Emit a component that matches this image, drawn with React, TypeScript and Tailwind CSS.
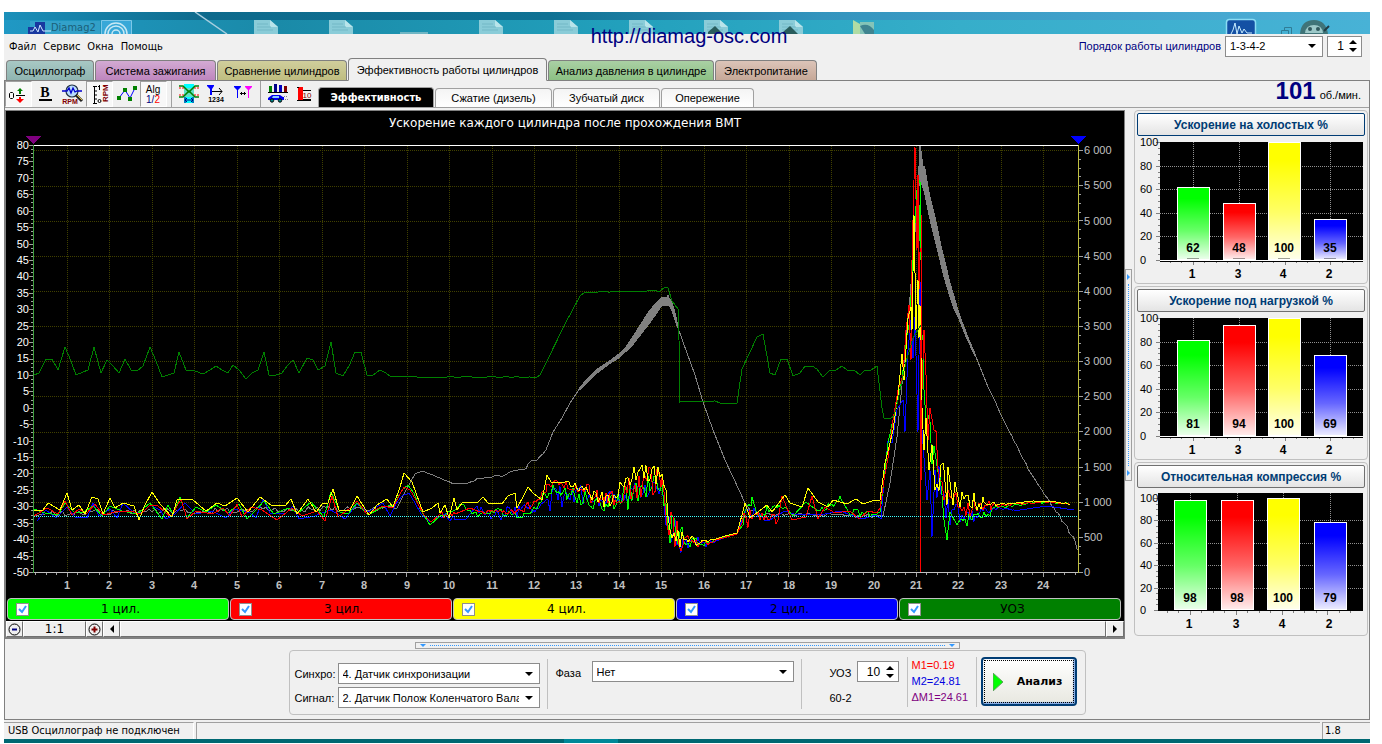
import { ReactNode, useId, useState } from "react";
import clsx from "clsx";

type Knot = [x: number, y: number, noise?: number];

// Small seeded generator, keeps every trace identical between renders
const createRandom = (seed: number) => {
  let state = seed;
  return () => {
    state = (state * 16807) % 2147483647;
    return state / 2147483647;
  };
};

// Walks through the knots and adds noise where a knot asks for it
const buildTrace = (knots: Knot[], seed = 1, step = 2) => {
  const random = createRandom(seed * 7919);
  const points: string[] = [];

  knots.forEach(([x, y, noise = 0], index) => {
    points.push(`${x},${y}`);
    const next = knots[index + 1];
    if (!next || !noise) return;

    for (let px = x + step; px < next[0]; px += step) {
      const t = (px - x) / (next[0] - x);
      const py = y + (next[1] - y) * t + (random() - 0.5) * 2 * noise;
      points.push(`${px},${py.toFixed(1)}`);
    }
  });

  return points.join(" ");
};

const advance: Knot[] = [
  [34, 375], [39, 373], [46, 359], [52, 359], [58, 370], [65, 347], [71, 361], [76, 375], [88, 370],
  [94, 347], [101, 373], [107, 360], [113, 366], [119, 373], [125, 359], [131, 370], [137, 371],
  [143, 366], [150, 347], [156, 361], [162, 377], [168, 375], [174, 373], [179, 352], [186, 370],
  [195, 371], [203, 374], [210, 370], [216, 366], [222, 370], [228, 373], [233, 365], [239, 370],
  [246, 379], [252, 373], [258, 370], [264, 352], [269, 375], [276, 375], [282, 373], [287, 366],
  [293, 360], [299, 373], [307, 358], [313, 360], [318, 370], [325, 366], [331, 342], [336, 373],
  [343, 376], [349, 366], [355, 352], [361, 352], [367, 375], [373, 375], [380, 370], [386, 373],
  [391, 377, 0.5], [537, 377], [540, 375], [546, 363], [565, 324], [580, 296], [585, 292, 0.5],
  [660, 291], [665, 287], [668, 288], [672, 301], [678, 309], [679, 340], [680, 402, 0.5], [715, 401],
  [720, 403], [737, 403], [742, 369], [757, 337], [763, 334], [770, 373], [775, 375], [781, 359],
  [787, 359], [793, 376], [800, 373], [805, 366], [812, 366], [817, 369], [823, 377], [829, 371],
  [836, 370], [842, 366], [847, 370], [854, 370], [860, 375], [865, 370], [871, 370], [877, 366],
  [882, 408], [884, 418], [890, 419], [894, 416], [898, 400], [906, 362], [913, 338], [921, 325],
];

const speed: Knot[] = [
  [34, 516], [50, 513, 3], [397, 508], [405, 492], [410, 483], [415, 474], [422, 471, 1], [440, 478, 1],
  [453, 484, 1], [468, 483, 1], [480, 478, 1], [505, 475, 1], [513, 471, 1], [526, 469, 1], [528, 464, 2],
  [537, 460, 1], [546, 450], [553, 432], [562, 418], [570, 403], [580, 388],
];

const speedDown: Knot[] = [
  [678, 328], [695, 375], [703, 402], [713, 430], [725, 460], [733, 477], [745, 503], [750, 510, 3],
  [760, 514, 2], [883, 516], [890, 483], [897, 437], [901, 395], [905, 353], [910, 297], [914, 247],
  [918, 187], [920, 146], [921, 170],
];

const speedEnd: Knot[] = [
  [974, 352], [988, 387, 1], [998, 408, 1], [1010, 433, 1], [1030, 472, 1], [1050, 502, 2],
  [1063, 522, 5], [1078, 550],
];

const cylinderFour: Knot[] = [
  [34, 511], [43, 510], [48, 503], [60, 510], [67, 493], [72, 510], [79, 505], [85, 514], [92, 497],
  [98, 499], [103, 514], [110, 498], [115, 508], [123, 503], [134, 506], [139, 520], [144, 507],
  [152, 492], [160, 504], [172, 517], [177, 500], [182, 499], [192, 499], [206, 511], [217, 503],
  [225, 506], [237, 498], [248, 512], [260, 497], [271, 505], [285, 506], [291, 499], [297, 514],
  [308, 499], [316, 512], [323, 503], [328, 503], [333, 489], [339, 510], [350, 510], [357, 496],
  [369, 515], [377, 505], [387, 499], [393, 507], [400, 487], [404, 473], [412, 482], [423, 512],
  [432, 508], [438, 503], [440, 513], [445, 505], [449, 518], [454, 498], [457, 510], [463, 502],
  [477, 503], [483, 497], [488, 503], [502, 504], [508, 496], [515, 493], [517, 508], [523, 497],
  [528, 487], [533, 493], [542, 500], [547, 475], [551, 482], [565, 482, 4], [580, 488, 6],
  [600, 498, 8], [612, 502, 10], [622, 485, 9], [638, 472, 12], [662, 474, 8], [666, 490, 8],
  [670, 530, 12], [684, 540, 6], [700, 543, 2], [716, 539], [725, 536], [737, 533], [742, 515],
  [745, 503], [750, 518], [767, 505], [772, 512], [785, 495], [790, 503], [802, 507], [808, 488],
  [818, 502], [828, 507], [833, 500], [847, 504], [856, 499], [863, 504], [875, 500], [880, 500],
  [885, 463], [890, 443], [893, 430], [898, 396], [902, 354], [904, 380], [908, 318], [911, 307],
  [912, 330], [914, 215], [916, 330], [918, 280], [919, 338], [920, 305], [922, 408], [924, 450],
  [926, 418], [929, 470], [932, 445], [935, 490, 22], [944, 470], [947, 505], [948, 467], [953, 505],
  [955, 482], [960, 507, 14], [975, 502, 10], [984, 502, 4], [1000, 504, 1], [1030, 502, 1], [1052, 501, 1],
  [1070, 504],
];

const cylinderOne: Knot[] = [
  [34, 509], [45, 513], [58, 515], [65, 503], [75, 513], [84, 512], [93, 506], [102, 516], [110, 506],
  [122, 511], [137, 514], [150, 503], [162, 519], [168, 505], [173, 514], [180, 497], [187, 518],
  [196, 507], [206, 512], [216, 505], [228, 513], [239, 504], [247, 519], [256, 510], [264, 501],
  [274, 514], [288, 508], [298, 513], [311, 502], [324, 517], [331, 492], [340, 512], [348, 514],
  [357, 503], [368, 515], [383, 507], [394, 505], [402, 490], [408, 485], [414, 493], [420, 509],
  [430, 525], [440, 516, 2], [450, 512, 3], [464, 505, 3], [478, 517, 3], [495, 510, 4], [520, 517, 3],
  [535, 508, 4], [545, 494, 6], [555, 490, 8], [575, 497, 9], [600, 503, 9], [622, 500, 16], [640, 488, 14],
  [662, 484, 9], [668, 525, 16], [684, 542, 8], [700, 544, 3], [716, 540], [737, 533], [743, 525, 10],
  [752, 497], [757, 514, 5], [785, 507], [793, 516], [806, 502], [818, 511, 4], [841, 499], [848, 511, 4],
  [875, 515], [880, 512], [884, 480], [888, 443], [893, 420], [897, 402], [902, 380], [906, 340],
  [909, 325], [912, 280], [914, 240], [917, 190], [920, 180], [921, 260], [922, 340], [923, 335],
  [924, 390], [926, 420, 20], [938, 472, 20], [944, 520], [947, 540], [950, 512], [957, 525, 9],
  [972, 520, 7], [992, 509, 3], [1004, 507, 1], [1030, 503, 1], [1052, 502, 1], [1070, 504],
];

const cylinderThree: Knot[] = [
  [34, 516], [47, 508], [58, 514], [65, 501], [72, 515], [79, 509], [86, 514], [95, 504], [103, 515],
  [115, 512], [130, 511], [141, 514], [150, 505], [158, 506], [171, 517], [181, 499], [187, 519],
  [196, 511], [212, 514], [223, 508], [230, 516], [237, 504], [242, 517], [251, 507], [262, 510],
  [277, 520], [292, 508], [302, 516], [317, 511], [325, 521], [332, 496], [338, 517], [349, 509],
  [357, 501], [367, 514], [383, 506], [393, 508], [400, 494], [404, 487], [410, 490], [416, 500],
  [424, 515], [431, 522], [440, 514, 4], [455, 514], [470, 508], [480, 512, 3], [500, 510, 4],
  [520, 510, 4], [540, 500, 6], [547, 484, 4], [560, 483, 5], [585, 490, 9], [600, 500, 9], [615, 500, 12],
  [635, 485, 15], [662, 478, 9], [667, 525, 18], [684, 540, 6], [700, 543, 3], [716, 540], [737, 534],
  [742, 523, 12], [756, 515, 5], [778, 520], [782, 496], [792, 520], [806, 517], [812, 496], [818, 519],
  [825, 507], [835, 513], [850, 511], [859, 519], [868, 511], [877, 513], [880, 508], [884, 480],
  [888, 458], [893, 420], [898, 390], [903, 375], [906, 330], [909, 305], [911, 360], [912, 260],
  [914, 180], [915, 147], [917, 250], [918, 175], [919, 290], [921, 215], [922, 390], [924, 330],
  [926, 375], [928, 440], [930, 408], [934, 430, 22], [940, 480, 20], [948, 490, 15], [960, 507, 12],
  [975, 507, 7], [992, 506, 3], [1004, 505, 1], [1030, 503, 1], [1045, 502, 1], [1070, 504],
];

const cylinderTwo: Knot[] = [
  [37, 521], [46, 510], [56, 518], [67, 507], [75, 517], [87, 518], [93, 503], [99, 516], [110, 509],
  [117, 518], [123, 503], [133, 512], [142, 513], [150, 505], [160, 510], [166, 519], [175, 514],
  [185, 503], [196, 514], [212, 511], [226, 518], [234, 509], [250, 513], [256, 518], [263, 499],
  [270, 513], [285, 514], [293, 506], [299, 519], [315, 516], [322, 513], [331, 510], [345, 519],
  [357, 504], [368, 512], [383, 503], [390, 516], [396, 504], [402, 496], [409, 493], [415, 503],
  [421, 514], [430, 522], [440, 516, 4], [455, 520], [466, 519], [475, 508, 5], [495, 515, 7], [520, 510, 6],
  [535, 512, 4], [548, 500, 12], [575, 493, 10], [600, 500, 8], [625, 495, 13], [645, 485, 14], [662, 487, 9],
  [667, 525, 14], [684, 543, 8], [700, 545, 3], [716, 541], [737, 533], [742, 520, 10], [756, 514, 4],
  [768, 521], [785, 511], [794, 514], [820, 515], [840, 511], [862, 519], [876, 515], [881, 519],
  [884, 480], [888, 441], [892, 443], [897, 410], [903, 400], [905, 432], [908, 350], [911, 320],
  [913, 358], [915, 317], [918, 432], [920, 280], [922, 430], [927, 500], [930, 470], [932, 537],
  [935, 470, 28], [942, 495, 20], [952, 510, 15], [962, 515, 10], [975, 516, 5], [992, 510, 2], [1000, 508, 1],
  [1020, 510], [1047, 506], [1074, 510],
];

const channels = [
  { name: "1 цил.", className: "bg-[#00ff00]" },
  { name: "3 цил.", className: "bg-[#ff0000]" },
  { name: "4 цил.", className: "bg-[#ffff00]" },
  { name: "2 цил.", className: "bg-[#0000ff]" },
  { name: "УОЗ", className: "bg-[#008000]" },
];

const mainTabs = [
  { name: "Осциллограф", className: "w-[88px] from-[#a8c8c4] to-[#8fb4b0]" },
  { name: "Система зажигания", className: "w-[121px] from-[#d3aad3] to-[#be86be]" },
  { name: "Сравнение цилиндров", className: "w-[130px] from-[#d0ce9c] to-[#bfbd80]" },
  { name: "Эффективность работы цилиндров", className: "w-[199px]" },
  { name: "Анализ давления в цилиндре", className: "w-[166px] from-[#aad0a4] to-[#8cc084]" },
  { name: "Электропитание", className: "w-[102px] from-[#dcc4b8] to-[#c6a898]" },
];

const chartTabs = [
  { name: "Эффективность", className: "w-[116px]" },
  { name: "Сжатие (дизель)", className: "w-[117px]" },
  { name: "Зубчатый диск", className: "w-[107px]" },
  { name: "Опережение", className: "w-[93px]" },
];

const toolGroups: { name: string; pressed?: boolean; icon: ReactNode }[][] = [
  [
    {
      name: "Ноль",
      pressed: true,
      icon: (
        <>
          <path d="M3.500 9.500h2l1 1v4l-1 1h-2l-1-1v-4z" fill="none" stroke="#000" />
          <path d="M9 12h9v1H9z" />
          <path d="M13 5l3 3h-2v3h-2V8h-2z" fill="#008000" />
          <path d="M12 14h2v2h3l-4 4-4-4h3z" fill="#f00" />
        </>
      ),
    },
    {
      name: "Жирный",
      icon: (
        <>
          <text x="11" y="14" textAnchor="middle" className="font-['Liberation_Serif',serif] text-[14px] font-bold">
            B
          </text>
          <path d="M5 16h13v2H5z" />
        </>
      ),
    },
    {
      name: "Обороты",
      icon: (
        <>
          <circle cx="11" cy="8" r="6" fill="#b8dcff" stroke="#234" strokeWidth="1.200" />
          <path d="M1 8h5l2-3 2 5 2-5 2 4 2-1h5" fill="none" stroke="#00c" strokeWidth="1.300" />
          <path d="M15 12l6 6" stroke="#222" strokeWidth="3" />
          <path d="M16 12l5 5" stroke="#e0c040" />
          <text x="9" y="21" textAnchor="middle" fill="#800000" className="font-['Liberation_Sans',sans-serif] text-[7px] font-bold">
            RPM
          </text>
        </>
      ),
    },
    {
      name: "Шкала оборотов",
      pressed: true,
      icon: (
        <>
          <path d="M5 3.500h4M6.500 3v17M5 20.500h4M7 8h2M7 12h2M7 16h2" fill="none" stroke="#000" />
          <path d="M11.500 2v5M10 3.500h2" stroke="#000" />
          <circle cx="11.500" cy="18" r="1.500" fill="none" stroke="#000" />
          <text x="-19" y="20" transform="rotate(-90)" fill="#800000" className="font-['Liberation_Sans',sans-serif] text-[8px] font-bold">
            RPM
          </text>
        </>
      ),
    },
    {
      name: "Точки",
      icon: (
        <>
          <path d="M4 15l6-8 5 8 5-10" fill="none" stroke="#00f" />
          <path d="M2 13h4v4H2zM8 5h4v4H8zM13 14h4v4h-4zM18 3h4v4h-4z" fill="#008000" />
        </>
      ),
    },
    {
      name: "Алгоритм",
      pressed: true,
      icon: (
        <>
          <text x="11" y="10" textAnchor="middle" className="font-['Liberation_Sans',sans-serif] text-[10px]">
            Alg
          </text>
          <text x="11" y="20" textAnchor="middle" fill="#000080" className="font-['Liberation_Sans',sans-serif] text-[10px]">
            1/<tspan fill="#f00">2</tspan>
          </text>
        </>
      ),
    },
  ],
  [
    {
      name: "Фаза",
      icon: (
        <>
          <path d="M7 1h10v4H7zM7 14h10v6H7z" fill="#00ffff" />
          <path d="M7 5h10v9H7z" fill="#60e0c8" />
          <path d="M2 5h5M17 5h5M2 12h5M17 12h5" stroke="#f00" strokeDasharray="2 1" />
          <path d="M2 3h4l5 5h2l5-5h4M2 14h4l5-5h2l5 5h4" fill="none" stroke="#008000" strokeWidth="1.500" />
          <path d="M8 14v6M16 14v6M8 17h8M10 15l-2 2 2 2M14 15l2 2-2 2" fill="none" stroke="#000080" />
        </>
      ),
    },
    {
      name: "Нумерация меток",
      icon: (
        <>
          <path d="M3 2h7v1L8 6v6H6V6L3 3z" fill="#00f" />
          <path d="M8 8.500h10M15 5l3 3.500-3 3.500" fill="none" stroke="#000" />
          <text x="12" y="19" textAnchor="middle" className="font-['Liberation_Sans',sans-serif] text-[7px] font-bold">
            1234
          </text>
        </>
      ),
    },
    {
      name: "Метки",
      icon: (
        <>
          <path d="M3 3h7v1L7 7v8H6V7L3 4z" fill="#00f" />
          <path d="M14 3h7v1l-3 3v8h-1V7l-3-3z" fill="#f0f" />
          <path d="M9 10.500h6M10.500 9v3M13.500 9v3" stroke="#000" />
        </>
      ),
    },
  ],
  [
    {
      name: "Отчёт",
      icon: (
        <>
          <path d="M3 3h3v6H3z" fill="#008000" />
          <path d="M8 1h3v8H8z" fill="#008" />
          <path d="M13 2h3v7h-3z" fill="#0000c0" />
          <path d="M18 3h3v6h-3z" fill="#800000" />
          <path d="M2 9h20v1H2z" />
          <path d="M2 15l4-3h8l3 2h1v3H2z" fill="#0000f0" />
          <path d="M7 13h6v2H6z" fill="#8cf" />
          <circle cx="6" cy="17.500" r="1.700" fill="#088" stroke="#000" />
          <circle cx="14" cy="17.500" r="1.700" fill="#088" stroke="#000" />
          <path d="M18 13.500h4M19 16.500h3" stroke="#888" strokeDasharray="1 1" />
        </>
      ),
    },
    {
      name: "Столбцы",
      icon: (
        <>
          <path d="M5 4h5v13H5z" fill="#f00" />
          <path d="M4 4.500h2M4 17.500h14" stroke="#000" />
          <path d="M10 7.500h8M10 16.500h8" stroke="#000" />
          <text x="14" y="15" textAnchor="middle" fill="#800000" className="font-['Liberation_Sans',sans-serif] text-[8px]">
            10
          </text>
        </>
      ),
    },
  ],
];

const Triangle = ({ direction, className }: { direction: "up" | "down" | "left" | "right"; className?: string }) => {
  const paths = {
    up: "M0 4h8L4 0z",
    down: "M0 0h8L4 4z",
    left: "M4 0v8L0 4z",
    right: "M0 0v8l4-4z",
  };
  const isVertical = direction === "up" || direction === "down";

  return (
    <svg
      aria-hidden="true"
      viewBox={isVertical ? "0 0 8 4" : "0 0 4 8"}
      className={clsx(isVertical ? "h-1 w-2" : "h-2 w-1", "shrink-0", className)}
    >
      <path d={paths[direction]} fill="currentColor" />
    </svg>
  );
};

interface SelectProps {
  id: string;
  value: string;
  className?: string;
}

const Select = ({ id, value, className }: SelectProps) => (
  <div className={clsx("relative flex h-[21px] items-center border border-[#8c8c8c] bg-white", className)}>
    <select id={id} defaultValue={value} className="h-full w-full appearance-none overflow-hidden bg-transparent pr-5 pl-1 text-[11px] outline-none">
      <option>{value}</option>
    </select>
    <Triangle direction="down" className="pointer-events-none absolute right-[6px]" />
  </div>
);

interface SpinnerProps {
  id?: string;
  label?: string;
  initial: number;
  className?: string;
}

const Spinner = ({ id, label, initial, className }: SpinnerProps) => {
  const [value, setValue] = useState(initial);

  return (
    <div className={clsx("flex h-[21px] items-center border border-[#8c8c8c] bg-white pr-1", className)}>
      <input
        id={id}
        aria-label={label}
        value={value}
        onChange={(event) => setValue(Number(event.target.value) || 0)}
        className="w-0 min-w-0 flex-1 bg-transparent pl-1 text-center text-xs outline-none"
      />
      <div className="flex flex-col gap-1">
        <button type="button" aria-label="Больше" onClick={() => setValue(value + 1)} className="block">
          <Triangle direction="up" />
        </button>
        <button type="button" aria-label="Меньше" onClick={() => setValue(value - 1)} className="block">
          <Triangle direction="down" />
        </button>
      </div>
    </div>
  );
};

const Desktop = () => (
  <svg viewBox="4 12 1366 22" preserveAspectRatio="none" aria-hidden="true" className="block h-[22px] w-full">
    <defs>
      <linearGradient id="sky">
        <stop offset="0" stopColor="#1b90ba" />
        <stop offset="0.150" stopColor="#0e6a8c" />
        <stop offset="0.400" stopColor="#0f7294" />
        <stop offset="0.600" stopColor="#3494be" />
        <stop offset="1" stopColor="#4eb0d8" />
      </linearGradient>
      <linearGradient id="glass">
        <stop offset="0" stopColor="#2098c4" />
        <stop offset="0.200" stopColor="#1a8aa8" />
        <stop offset="0.450" stopColor="#22a0bc" />
        <stop offset="0.700" stopColor="#36aeca" />
        <stop offset="1" stopColor="#48b2d6" />
      </linearGradient>
    </defs>
    <path d="M4 12h1366v22H4z" fill="url(#sky)" />
    <path d="M4 20h1366v14H4z" fill="url(#glass)" />
    <path d="M195 12l32 22" stroke="#a8cfe0" strokeWidth="1.500" />
    <path d="M30 21h70v13H30z" fill="#50b4dc" opacity="0.400" />
    <path d="M35 22h10v12H35zM28 27h7v7h-7z" fill="#1838a0" />
    <path d="M30 31h3l2-4 3 5 2-7 3 6h8" fill="none" stroke="#d0e8ff" />
    <text x="51" y="31" fill="#1c5f78" className="font-['DejaVu_Sans_Condensed','DejaVu_Sans',sans-serif] text-[11px]">
      Diamag2
    </text>
    <path d="M101.500 20.500h30v14h-30z" fill="#38a8d8" stroke="#7cc8e8" />
    <path d="M105 34a11 11 0 0 1 22 0M108 34a8 8 0 0 1 16 0M112 34a4 4 0 0 1 8 0" fill="none" stroke="#c8e8f4" strokeWidth="1.500" />
    {[254, 329, 479, 554, 629, 704, 779].map((x) => (
      <g key={x}>
        <path d={`M${x} 20h16l8 7v7H${x}z`} fill="#8accd8" />
        <path d={`M${x + 16} 20v7h8z`} fill="#b8e4ea" />
        <path d={`M${x + 3} 24h11M${x + 3} 27h14M${x + 3} 30h16`} stroke="#72b8c6" />
        {x > 700 && <path d={`M${x + 4} 32l7-6 8 8h-15z`} fill="#285c5c" />}
      </g>
    ))}
    <path d="M400 32h28v2h-28z" fill="#70b6c4" />
    <path d="M853 20l7 4v10h-7z" fill="#b0dca4" />
    <path d="M860 22h14v12h-14z" fill="#84c4b8" />
    <path d="M860 26q8-4 14 4v4h-9z" fill="#3f8490" />
    <rect x="1226.500" y="19.500" width="29" height="18" rx="3" fill="#1450a4" stroke="#8adcf4" strokeWidth="1.500" />
    <path d="M1231 34l2-4 2-7 2 11 2-8 3 7 2-4 3 4h5" fill="none" stroke="#c8ecff" />
    <path d="M1284.500 30v-2.500h7V34M1281.500 34v-3.500h7V34" fill="none" stroke="#2f7c96" />
    <path d="M1300 34q1-14 14-14 12 0 14 14z" fill="#3f7478" />
    <path d="M1305 33q1-8 9-8 8 0 9 8z" fill="#9cc8c8" />
    <circle cx="1310" cy="29" r="2" fill="#30585c" />
    <circle cx="1318" cy="29" r="2" fill="#30585c" />
    <path d="M1324 31l5-5" stroke="#203c44" strokeWidth="2" />
  </svg>
);

const range = (count: number) => Array.from({ length: count }, (_, index) => index);

const AccelerationChart = () => (
  <svg
    viewBox="6 111 1118 487"
    role="img"
    aria-label="Ускорение каждого цилиндра"
    className="block h-auto w-full font-['Liberation_Sans',Arial,sans-serif] text-[11px]"
  >
    <text x="565" y="127" textAnchor="middle" fill="#fff" className="font-['DejaVu_Sans',Verdana,sans-serif] text-xs">
      Ускорение каждого цилиндра после прохождения ВМТ
    </text>

    <g shapeRendering="crispEdges">
      {/* Grid */}
      {range(24).map((index) => {
        const x = Math.round(67 + index * 42.45) + 0.5;
        return <path key={index} d={`M${x} 146V572`} stroke="#404000" strokeDasharray="1 1" />;
      })}
      {range(12).map((index) => {
        const y = Math.round(537 - index * 35.15) + 0.5;
        return <path key={index} d={`M34 ${y}H1078`} stroke="#404000" strokeDasharray="1 1" />;
      })}

      {/* Ticks */}
      {range(105).map((index) => {
        const y = Math.round(145 + index * 4.106) + 0.5;
        return <path key={index} d={`M${index % 4 ? 31 : 29} ${y}H33`} stroke="#a0a0a0" />;
      })}
      {range(49).map((index) => {
        const y = Math.round(572 - index * 8.79) + 0.5;
        return <path key={index} d={`M1079 ${y}H${index % 4 ? 1081 : 1083}`} stroke="#a0a0a0" />;
      })}
      {range(99).map((index) => {
        const x = Math.round(35 + index * 10.61) + 0.5;
        return <path key={index} d={`M${x} 573V${(index - 3) % 4 ? 575 : 577}`} stroke="#a0a0a0" />;
      })}

      {/* Traces */}
      <g fill="none" strokeWidth="1">
        <polyline points={buildTrace(speed, 3, 3)} stroke="#808080" />
        <polyline points={buildTrace(speedDown, 4, 4)} stroke="#808080" />
        <polyline points={buildTrace(speedEnd, 5, 2)} stroke="#808080" />
        <polygon
          points="579,388 588,377 598,368 610,360 618,354 626,346 634,334 641,323 648,312 656,302 662,297 667,297 668,293 669,297 672,301 675,311 679,328 677,328 672,312 669,306 662,306 656,315 648,326 641,335 634,344 626,352 618,359 610,364 598,373 588,382 580,390"
          fill="#808080"
        />
        <polygon
          points="917,190 919,160 920,146 922,152 923,166 925,166 928,184 931,199 935,215 938,228 942,248 946,264 950,281 955,298 960,315 968,336 976,355 975,357 966,338 958,318 953,308 948,292 943,275 938,254 933,234 928,213 924,192 921,184"
          fill="#808080"
        />
        <polyline points={buildTrace(cylinderTwo, 11)} stroke="#0000ff" />
        <polyline points={buildTrace(cylinderOne, 23)} stroke="#00ff00" />
        <polyline points={buildTrace(cylinderThree, 37)} stroke="#ff0000" />
        <polyline points={buildTrace(cylinderFour, 53)} stroke="#ffff00" />
        <polyline points={buildTrace(advance, 5, 6)} stroke="#008000" />
        <path d="M920.500 194v54M919.500 205v36" stroke="#00ff00" />
        <path d="M920.500 340v232M921.500 400v80" stroke="#ff0000" />
      </g>
      <path d="M34 516.500H1078" stroke="#40ffff" strokeDasharray="1 1" />

      {/* Frame */}
      <path d="M33 145.500H1079" stroke="#fff" />
      <path d="M33 572.500H1079" stroke="#c0c0c0" />
      <path d="M33.500 145V573" stroke="#40a040" />
      <path d="M1078.500 145V573" stroke="#c0c040" />
      <path d="M25 136h16l-8 8z" fill="#800080" />
      <path d="M1070 136h16l-8 8z" fill="#0000ff" />
    </g>

    {range(27).map((index) => (
      <text key={index} x="29" y={Math.round(149 + index * 16.42)} textAnchor="end" fill="#fff">
        {80 - index * 5}
      </text>
    ))}
    {range(13).map((index) => (
      <text key={index} x="1084" y={Math.round(576 - index * 35.15)} fill="#c0c0c0">
        {(index * 500).toString().replace(/^(\d)(\d{3})$/, "$1\u00a0$2")}
      </text>
    ))}
    {range(24).map((index) => (
      <text key={index} x={Math.round(67 + index * 42.45)} y="589" textAnchor="middle" fill="#c0c0c0" className="font-bold">
        {index + 1}
      </text>
    ))}
  </svg>
);

interface BarPanelProps {
  title: string;
  values: number[];
  focused?: boolean;
  compact?: boolean;
}

const bars = [
  { cylinder: 1, color: "#00ff00" },
  { cylinder: 3, color: "#ff0000" },
  { cylinder: 4, color: "#ffff00" },
  { cylinder: 2, color: "#0000ff" },
];

const BarPanel = ({ title, values, focused, compact }: BarPanelProps) => {
  const id = useId();
  const left = compact ? 21 : 23;
  const top = compact ? 5 : 6;
  const bottom = compact ? 122 : 124;
  const unit = compact ? 1.12 : 1.18;
  const centers = compact ? [53, 100, 146, 193] : [56, 102, 147, 193];

  return (
    <section className="rounded-sm border border-[#c0c0c0] px-[2px] pt-[2px]">
      <button
        type="button"
        className={clsx(
          "block h-[23px] w-full rounded-xs border bg-linear-to-b from-white to-[#e4e4e4] text-center text-xs font-bold text-[#003c74]",
          focused ? "border-[#003c74]" : "border-[#707070]"
        )}
      >
        {title}
      </button>
      <svg viewBox="0 0 228 147" role="img" aria-label={title} className="block h-auto w-full text-[11px]">
        <defs>
          {bars.map(({ cylinder, color }) => (
            <linearGradient key={cylinder} id={`${id}-${cylinder}`} x1="0" y1="0" x2="0" y2="1">
              <stop offset="0.150" stopColor={color} />
              <stop offset="0.600" stopColor={color} stopOpacity="0.600" />
              <stop offset="1" stopColor={color} stopOpacity="0.080" />
            </linearGradient>
          ))}
        </defs>
        <g shapeRendering="crispEdges">
          <path d={`M${left} ${top}H226V${bottom + 1}H${left}z`} />
          {range(21).map((index) => {
            const y = Math.round(bottom - index * 5 * unit) + 0.5;
            return <path key={index} d={`M${left - (index % 4 ? 2 : 4)} ${y}H${left}`} stroke="#808080" />;
          })}
          {[20, 40, 60, 80].map((value) => {
            const y = Math.round(bottom - value * unit) + 0.5;
            return <path key={value} d={`M${left} ${y}H226`} stroke="#909090" strokeDasharray="1 1" />;
          })}
          {centers.map((x) => (
            <path key={x} d={`M${x + 0.5} ${top}V${bottom}`} stroke="#909090" strokeDasharray="1 1" />
          ))}
          {range(17).map((index) => {
            const x = Math.round(centers[0] - 23 + index * 11.45) + 0.5;
            return <path key={index} d={`M${x} ${bottom + 1}v${(index - 2) % 4 ? 2 : 4}`} stroke="#808080" />;
          })}
          {values.map((value, index) => {
            const height = Math.round(value * unit);
            return (
              <g key={index}>
                <rect x={centers[index] - 16} y={bottom - height} width="33" height={height} fill="#fff" />
                <rect
                  x={centers[index] - 15}
                  y={bottom - height + 1}
                  width="31"
                  height={height - 2}
                  fill={`url(#${id}-${bars[index].cylinder})`}
                />
                {focused && <path d={`M${centers[index] - 6} ${bottom - 1.5}h12`} stroke="#00000060" />}
              </g>
            );
          })}
          {!compact && <path d={`M${left} ${bottom + 0.5}H226`} stroke="#fff" />}
          {!compact && <path d={`M${left} ${bottom + 1.5}H226`} stroke="#000" />}
        </g>
        {[0, 20, 40, 60, 80, 100].map((value) => (
          <text key={value} x="3" y={Math.round(bottom + 4 - value * unit)}>
            {value}
          </text>
        ))}
        {values.map((value, index) => (
          <g key={index} textAnchor="middle" className="text-xs font-bold">
            <text x={centers[index]} y={bottom - 8}>
              {value}
            </text>
            <text x={centers[index] - 1} y={bottom + 18}>
              {bars[index].cylinder}
            </text>
          </g>
        ))}
      </svg>
    </section>
  );
};

const Splitter = ({ vertical }: { vertical?: boolean }) => (
  <div
    role="separator"
    className={clsx(
      "flex items-center justify-between border border-[#a0a0a0] text-[#3399ff]",
      vertical ? "h-[212px] w-[7px] flex-col py-1" : "h-[7px] w-[545px] px-1"
    )}
  >
    <Triangle direction={vertical ? "right" : "down"} className={vertical ? "h-[6px] w-[3px]" : "h-[3px] w-[6px]"} />
    <span
      className={clsx(
        "flex-1 border-dotted border-[#3399ff]",
        vertical ? "my-1 w-px border-l" : "mx-1 h-px border-t"
      )}
    />
    <Triangle direction={vertical ? "right" : "down"} className={vertical ? "h-[6px] w-[3px]" : "h-[3px] w-[6px]"} />
  </div>
);

const Legend = () => (
  <div className="grid grid-cols-5 gap-px bg-black pr-[3px] pb-px pl-px">
    {channels.map(({ name, className }) => (
      <label key={name} className={clsx("flex h-[22px] items-center rounded-sm border border-[#c0c0c0] px-2", className)}>
        <span className="grid h-[13px] w-[13px] place-items-center">
          <input
            type="checkbox"
            defaultChecked
            className="peer col-start-1 row-start-1 h-[13px] w-[13px] appearance-none border border-[#909090] bg-white"
          />
          <svg viewBox="0 0 9 9" aria-hidden="true" className="invisible col-start-1 row-start-1 h-[9px] w-[9px] peer-checked:visible">
            <path d="M1 4l3 3 4-6" fill="none" stroke="#3399ff" strokeWidth="2" />
          </svg>
        </span>
        <span className="flex-1 pr-2 text-center font-['DejaVu_Sans',Verdana,sans-serif] text-xs">{name}</span>
      </label>
    ))}
  </div>
);

const barButton =
  "flex shrink-0 items-center justify-center border border-t-white border-r-[#707070] border-b-[#707070] border-l-white";

const ScrollBar = () => (
  <div className="flex h-[17px] border-b border-[#808080] bg-[#efefef]">
    <button type="button" aria-label="Уменьшить" className={clsx(barButton, "w-[17px]")}>
      <svg viewBox="0 0 13 13" aria-hidden="true" className="h-[13px] w-[13px]">
        <circle cx="6.500" cy="6.500" r="5.500" fill="none" stroke="#000" />
        <path d="M4 6.500h5" stroke="#000080" strokeWidth="2" />
      </svg>
    </button>
    <div className={clsx(barButton, "w-[63px] font-['DejaVu_Sans',Verdana,sans-serif] text-xs")}>1:1</div>
    <button type="button" aria-label="Увеличить" className={clsx(barButton, "w-[17px]")}>
      <svg viewBox="0 0 13 13" aria-hidden="true" className="h-[13px] w-[13px]">
        <circle cx="6.500" cy="6.500" r="5.500" fill="none" stroke="#000" />
        <path d="M3.500 6.500h6M6.500 3.500v6" stroke="#800000" strokeWidth="2" />
      </svg>
    </button>
    <button type="button" aria-label="Влево" className={clsx(barButton, "w-[17px]")}>
      <Triangle direction="left" />
    </button>
    <div className={clsx(barButton, "flex-1 shrink")} />
    <button type="button" aria-label="Вправо" className={clsx(barButton, "w-[18px]")}>
      <Triangle direction="right" />
    </button>
  </div>
);

const Controls = () => (
  <section className="flex h-[65px] w-[797px] items-start rounded-sm border border-[#c0c0c0] pr-2 pl-[5px]">
    <div className="mt-3 grid grid-cols-[43px_202px] items-center gap-y-[3px]">
      <label htmlFor="sync">Синхро:</label>
      <Select id="sync" value="4.  Датчик синхронизации" />
      <label htmlFor="signal">Сигнал:</label>
      <Select id="signal" value="2.  Датчик Полож Коленчатого Вала" />
    </div>
    <div className="mt-2 ml-[7px] flex h-[50px] border-l border-[#c0c0c0] pt-[2px] pl-2">
      <label htmlFor="phase" className="w-9 pt-1">
        Фаза
      </label>
      <Select id="phase" value="Нет" className="w-[202px]" />
    </div>
    <div className="mt-2 ml-[7px] grid h-[50px] grid-cols-[27px_42px] content-start gap-y-2 border-l border-[#c0c0c0] pt-[2px] pr-2 pl-7">
      <label htmlFor="angle" className="pt-1">
        УОЗ
      </label>
      <Spinner id="angle" initial={10} />
      <span>60-2</span>
    </div>
    <div className="mt-[6px] h-[50px] w-[70px] border-x border-[#c0c0c0] pl-1">
      <p className="text-[#ff0000]">M1=0.19</p>
      <p className="text-[#0000e0]">M2=24.81</p>
      <p className="text-[#800080]">ΔM1=24.61</p>
    </div>
    <button
      type="button"
      className="mt-[6px] ml-1 flex h-[49px] flex-1 items-center rounded-sm border-2 border-[#003c74] bg-linear-to-b from-white to-[#e8e8e0] p-px font-bold shadow-[inset_-1px_-1px_1px_1px_#89ade4]"
    >
      <span className="flex h-full w-full items-center border border-dotted border-black pl-2">
        <svg viewBox="0 0 10 18" aria-hidden="true" className="h-[18px] w-[10px]">
          <path d="M0 0l10 9-10 9z" fill="#00ff00" stroke="#60a060" />
        </svg>
        <span className="flex-1 pl-1 text-center font-['DejaVu_Sans',Verdana,sans-serif]">Анализ</span>
      </span>
    </button>
  </section>
);

export default function App() {
  const [activeTab, setActiveTab] = useState(3);
  const [activeChart, setActiveChart] = useState(0);

  return (
    <div className="min-h-screen bg-white pt-3 pr-3 pl-1 font-['Liberation_Sans',Arial,sans-serif] text-[11px] leading-4 text-black">
      <div className="relative bg-[#f0f0f0]">
        <Desktop />
        <a
          href="http://diamag-osc.com"
          className="absolute top-3 left-1/2 -translate-x-1/2 pl-1 text-xl leading-6 text-[#000080]"
        >
          http://diamag-osc.com
        </a>

        <header className="flex h-6 items-center justify-between pr-2 pl-[5px]">
          <nav className="flex gap-[7px] pt-[2px] font-['DejaVu_Sans_Condensed','DejaVu_Sans',Tahoma,sans-serif]">
            {["Файл", "Сервис", "Окна", "Помощь"].map((item) => (
              <button key={item} type="button">
                {item}
              </button>
            ))}
          </nav>
          <div className="flex items-center gap-1">
            <label htmlFor="order" className="text-[#000080]">
              Порядок работы цилиндров
            </label>
            <Select id="order" value="1-3-4-2" className="w-[98px]" />
            <Spinner label="Цилиндр" initial={1} className="w-[35px]" />
          </div>
        </header>

        <nav className="flex h-[23px] items-end gap-px border-b border-[#808080] pl-[2px]">
          {mainTabs.map(({ name, className }, index) => (
            <button
              key={name}
              type="button"
              onClick={() => setActiveTab(index)}
              className={clsx(
                "rounded-t-sm border border-[#808080] text-center whitespace-nowrap",
                className,
                index === activeTab
                  ? "-mb-px h-[23px] border-b-[#f0f0f0] bg-[#f0f0f0]"
                  : "h-5 border-b-0 bg-linear-to-b"
              )}
            >
              {name}
            </button>
          ))}
        </nav>

        <div className="border border-t-0 border-[#808080]">
          <div className="flex h-[27px] items-end border-b border-[#a0a0a0]">
            {toolGroups.map((group, groupIndex) => (
              <div
                key={groupIndex}
                className={clsx("flex h-[26px] items-center", groupIndex > 0 && "ml-1 border-l border-[#a0a0a0] pl-[3px]")}
              >
                {group.map(({ name, pressed, icon }) => (
                  <button
                    key={name}
                    type="button"
                    title={name}
                    className={clsx(
                      "flex h-[26px] w-[27px] items-center justify-center border",
                      pressed ? "border-[#a0a0a0] border-r-white border-b-white bg-[#f8f8f8]" : "border-transparent"
                    )}
                  >
                    <svg viewBox="0 0 24 22" aria-hidden="true" className="h-[22px] w-6 shrink-0">
                      {icon}
                    </svg>
                  </button>
                ))}
              </div>
            ))}
            <nav className="flex h-5 items-end gap-px">
              {chartTabs.map(({ name, className }, index) => (
                <button
                  key={name}
                  type="button"
                  onClick={() => setActiveChart(index)}
                  className={clsx(
                    "rounded-t-sm border border-b-0 border-[#a0a0a0] text-center whitespace-nowrap",
                    className,
                    index === activeChart
                      ? "h-5 bg-black font-['DejaVu_Sans_Condensed','DejaVu_Sans',Verdana,sans-serif] font-bold text-white"
                      : "h-[19px] bg-linear-to-b from-[#f4f4f4] to-white"
                  )}
                >
                  {name}
                </button>
              ))}
            </nav>
            <p className="ml-auto flex items-baseline gap-1 pr-2 leading-6">
              <strong className="text-2xl leading-6 text-[#000080]">101</strong>
              об./мин.
            </p>
          </div>

          <main className="flex pt-[2px]">
            <div className="min-w-0 flex-1">
              <div className="border border-[#808080]">
                <div className="bg-black">
                  <AccelerationChart />
                  <Legend />
                </div>
                <ScrollBar />
              </div>
            </div>
            <div className="flex items-center">
              <Splitter vertical />
            </div>
            <aside className="mr-px ml-[2px] flex w-[234px] flex-col gap-[2px]">
              <BarPanel title="Ускорение на холостых %" values={[62, 48, 100, 35]} focused />
              <BarPanel title="Ускорение под нагрузкой %" values={[81, 94, 100, 69]} />
              <BarPanel title="Относительная компрессия %" values={[98, 98, 100, 79]} compact />
            </aside>
          </main>

          <div className="flex flex-col items-center gap-px pt-[3px] pb-1">
            <Splitter />
            <Controls />
          </div>
        </div>

        <footer className="flex h-[19px] gap-[2px] pt-[2px] font-['DejaVu_Sans_Condensed','DejaVu_Sans',Tahoma,sans-serif]">
          <p className="w-[190px] border-t border-r border-[#a0a0a0] border-r-white pl-1">USB Осциллограф не подключен</p>
          <p className="flex-1 border-t border-l border-[#a0a0a0]" />
          <p className="w-12 border-t border-l border-[#a0a0a0] pl-[2px]">1.8</p>
        </footer>
        <div className="flex h-1 justify-center bg-[#006872]">
          <span className="mr-48 w-[54px] bg-[#008898]" />
        </div>
      </div>
    </div>
  );
}
